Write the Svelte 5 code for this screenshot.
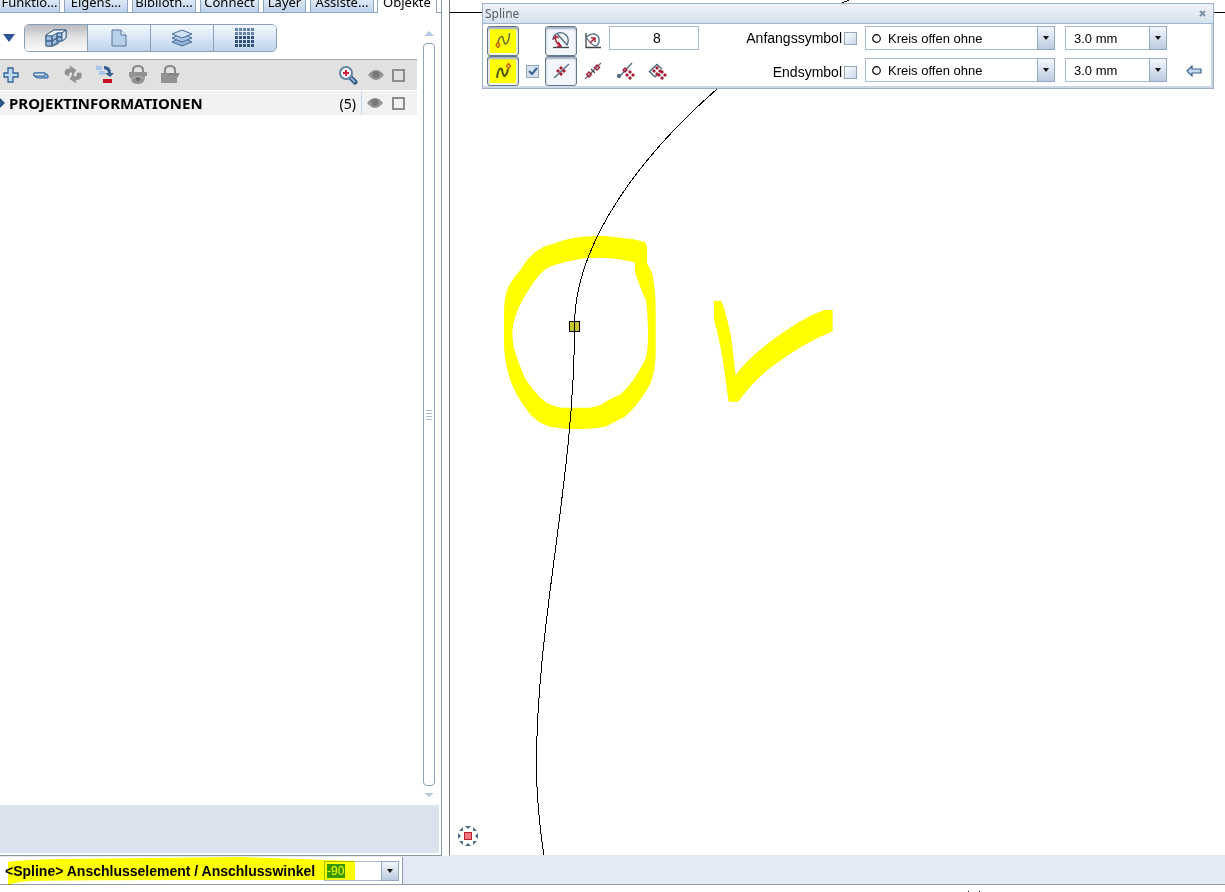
<script>
	const tabs = ['Funktio...', 'Eigens...', 'Biblioth...', 'Connect', 'Layer', 'Assiste...', 'Objekte']
	const views = ['Topologie', 'Teilbilder', 'Layer', 'Materialien']
	const actions = ['Aufklappen', 'Zuklappen', 'Aktualisieren', 'Sortieren', 'Sichtbarkeit sperren', 'Sperren']
	const symbols = ['Kreis offen ohne', 'Kreis offen', 'Kreis voll']
	const sizes = ['2.0 mm', '3.0 mm', '4.0 mm']
	let activeTab = 'Objekte'
	let activeView = 'Topologie'
	let points = '8'
	let angle = '-90'
	let keepTangent = true
	let ends = [
		{ id: 'start', label: 'Anfangssymbol', on: false, symbol: 'Kreis offen ohne', size: '3.0 mm' },
		{ id: 'end', label: 'Endsymbol', on: false, symbol: 'Kreis offen ohne', size: '3.0 mm' }
	]
</script>

{#snippet eye()}
	<svg width="16" height="12" viewBox="0 0 16 12">
		<path d="M0 6 Q4 1 8 1 T16 6 Q12 11 8 11 T0 6Z" fill="#999" />
		<circle cx="8" cy="5.500" r="3.500" fill="#777" />
		<path d="M1 6 Q4 2 8 2 T15 6" fill="none" stroke="#858585" />
	</svg>
{/snippet}

{#snippet arrow()}
	<span class="drop"><svg width="6" height="4" viewBox="0 0 6 4"><path d="M0 0H6L3 4Z" fill="#111" /></svg></span>
{/snippet}

{#snippet viewIcon(name)}
	{#if name === 'Topologie'}
		<svg width="22" height="18" viewBox="0 0 22 18" stroke="#3f5f86" stroke-linejoin="round">
			<path d="M1 6L9 1H21V9L17 12H14V14L8 17H1Z" fill="#a9c4e4" />
			<path d="M1 6L9 1H21L17 4H13L8 7H1Z" fill="#f3f8fd" />
			<path d="M1 7H7V12H1ZM1 12H7V17H1ZM7 7L12 4V9L7 12ZM7 12L12 9V14L7 17ZM12 4H17V8H12ZM12 8H17V12H12Z" fill="#9fbde0" />
			<path d="M17 4L21 1V9L17 12Z" fill="#e2edf8" />
		</svg>
	{:else if name === 'Teilbilder'}
		<svg width="16" height="18" viewBox="0 0 16 18">
			<path d="M1 1H10L15 6V17H1Z" fill="#b7cfe9" stroke="#56759c" />
			<path d="M10 1V6H15" fill="#eef5fc" stroke="#56759c" />
		</svg>
	{:else if name === 'Layer'}
		<svg width="22" height="18" viewBox="0 0 22 18" stroke="#4a6c94">
			<path d="M1 13L11 8L21 13L11 17Z" fill="#91b3da" />
			<path d="M1 9L11 4L21 9L11 13Z" fill="#a9c6e6" />
			<path d="M1 5L11 1L21 5L11 9Z" fill="#cfe0f3" />
		</svg>
	{:else}
		<svg width="20" height="20" viewBox="0 0 20 20">
			{#each [0, 1, 2, 3, 4] as row}
				{#each [0, 1, 2, 3, 4] as col}
					<rect x={col * 4} y={row * 4} width="3" height="3" fill={row < 2 ? '#6583ad' : '#34527f'} />
				{/each}
			{/each}
		</svg>
	{/if}
{/snippet}

{#snippet actionIcon(i)}
	<svg width="20" height="20" viewBox="0 0 20 20">
		{#if i === 0}
			<path d="M8 3H13V8H18V12H13V17H8V12H4V8H8Z" fill="#c3dbf2" stroke="#31639a" stroke-width="1.300" />
		{:else if i === 1}
			<path d="M2 8H13L16 10V13H5L2 11Z" fill="#8eb4dc" stroke="#31639a" />
			<path d="M2 8H13V11H2Z" fill="#d8e8f7" stroke="#31639a" />
		{:else if i === 2}
			<path d="M1 9Q0 3 7 4L6 1L12 5L9 10L8 7Q4 7 5 11ZM17 8Q19 15 11 15L12 18L6 14L9 9L10 12Q14 12 13 8Z" fill="#929292" stroke="#858585" stroke-width=".5" />
		{:else if i === 3}
			<path d="M0 1H6V5H0ZM3 6H9V10H3Z" fill="#a9c5e8" />
			<path d="M8 1Q15 1 15 8H18L14 12L9 8H12Q12 5 8 4Z" fill="#35608f" />
			<path d="M7 14H16V18H7Z" fill="#c51020" />
		{:else if i === 4}
			<path d="M5 8V4Q6 1 10 1T15 4V8" fill="none" stroke="#888" stroke-width="2" />
			<path d="M1 7H19V11H17Q17 19 10 19T3 14L1 11Z" fill="#929292" />
			<path d="M3 14Q10 9 17 14" fill="none" stroke="#bbb" />
			<circle cx="10" cy="14" r="2" fill="#6c6c6c" />
		{:else}
			<path d="M5 9V4Q6 1 10 1T15 4V9" fill="none" stroke="#888" stroke-width="2" />
			<path d="M1 8H20L17 13V18H1Z" fill="#929292" />
			<path d="M8 10Q13 7 18 11" fill="none" stroke="#777" />
		{/if}
	</svg>
{/snippet}

{#snippet knot(x, y)}
	<path
		transform="translate({x} {y})"
		d="M0 -5L2 -3L0 -1L-2 -3ZM0 1L2 3L0 5L-2 3ZM-3 -2L-1 0L-3 2L-5 0ZM3 -2L5 0L3 2L1 0Z"
		fill="#a51e38"
		stroke="none"
	/>
{/snippet}

{#snippet tool(kind)}
	<svg width="20" height="20" viewBox="0 0 20 20" fill="none" stroke="#526b7e" stroke-width="1.300">
		{#if kind === 'spline'}
			<path d="M5 12Q6 6 8.500 5.500C11 5 10 13 12.500 13Q16 12 16.500 2" stroke="#666f35" stroke-width="1.500" />
			<path d="M5 11.500L7 14L5 16.500L3 14Z" stroke="#d0560a" />
		{:else if kind === 'tangent'}
			<path d="M4 17Q5 8 7.500 7.500C10 7 9 15 11.500 15Q14 14 15 8" stroke="#4d560e" stroke-width="2" />
			<path d="M15.500 2.500L17.500 5L15.500 7.500L13.500 5Z" stroke="#d0560a" />
		{:else if kind === 'radius'}
			<path d="M2 16.500H18" stroke="#444" />
			<path d="M6 2.500L16 14Q19 8 15 4Q11 0 6 2.500Q2 4 2 9" />
			<path d="M5 5Q3 12 10 15M2.500 8L5 5L8 7M7 11L10 15L6 16" stroke="#b0233b" stroke-width="1.500" />
		{:else if kind === 'arc'}
			<path d="M3 2V16.500H18" stroke="#444" />
			<path d="M3 6Q8 2 12 3Q17 5 16 11Q15 14 13 15Q9 15 3 6Z" />
			<path d="M7 12L12 7M8 7H12V11" stroke="#b0233b" stroke-width="1.500" />
		{:else if kind === 'near'}
			<path d="M3 17L18 3" />
			{@render knot(10, 10)}
		{:else if kind === 'between'}
			<path d="M2 18L18 2" stroke="#6c6470" />
			<path d="M6 11L8.500 13.500L6 16L3.500 13.500ZM14 4L16.500 6.500L14 9L11.500 6.500Z" stroke="#a51e38" />
			<path d="M8 8L12 12" stroke="#444" />
		{:else if kind === 'end'}
			<path d="M4 16L17 2" />
			<circle cx="4" cy="15" r="1.500" fill="#526b7e" />
			<path d="M10 7L12 9L10 11L8 9Z" stroke="#a51e38" />
			{@render knot(15, 14)}
		{:else}
			<path d="M8 16L2.500 10.500L10 3.500L15 8M8 16L10 14" stroke-width="1.500" />
			{@render knot(10, 10)}
			{@render knot(15, 14)}
		{/if}
	</svg>
{/snippet}

<main>
	<div class="workspace">
		<aside>
			<nav>
				{#each tabs as tab}
					<button class="tab" class:active={tab === activeTab} on:click={() => (activeTab = tab)}>{tab}</button>
				{/each}
			</nav>
			<div class="browser">
				<div class="content">
					<div class="views">
						<button class="menu" aria-label="Menü">
							<svg width="12" height="8" viewBox="0 0 12 8"><path d="M0 0H12L6 8Z" fill="#2c5596" /></svg>
						</button>
						<div class="segments">
							{#each views as view}
								<button class:pressed={view === activeView} aria-label={view} on:click={() => (activeView = view)}>
									{@render viewIcon(view)}
								</button>
							{/each}
						</div>
					</div>
					<div class="actions">
						{#each actions as action, i}
							<button aria-label={action}>{@render actionIcon(i)}</button>
						{/each}
						<button class="search" aria-label="Suchen">
							<svg width="20" height="20" viewBox="0 0 20 20">
								<path d="M12 12L17 17" stroke="#31577f" stroke-width="5" stroke-linecap="round" />
								<path d="M13 13L17 17" stroke="#8eb1d6" stroke-width="2" />
								<circle cx="8" cy="8" r="6" fill="#fff" stroke="#64829f" stroke-width="2" />
								<path d="M8 5V11M5 8H11" stroke="#d8203c" stroke-width="2" />
							</svg>
						</button>
						<button class="small" aria-label="Alle sichtbar">{@render eye()}</button>
						<input class="square" type="checkbox" aria-label="Alle auswählen" />
					</div>
					<div class="group">
						<button class="name"><svg width="5" height="10" viewBox="0 0 5 10"><path d="M0 0L5 5L0 10Z" fill="#2c5580" /></svg><strong>PROJEKTINFORMATIONEN</strong></button>
						<span class="count">(5)</span>
						<div class="marks">
							<button class="small" aria-label="Sichtbar">{@render eye()}</button>
							<input class="square" type="checkbox" aria-label="Auswählen" />
						</div>
					</div>
				</div>
				<div class="scroll">
					<button aria-label="Nach oben"><svg width="10" height="5" viewBox="0 0 10 5"><path d="M0 5L5 0L10 5Z" fill="#b5cbe2" /></svg></button>
					<div class="thumb"><i></i><i></i><i></i><i></i></div>
					<button aria-label="Nach unten"><svg width="10" height="5" viewBox="0 0 10 5"><path d="M0 0L5 4L10 0Z" fill="#b5cbe2" /></svg></button>
				</div>
			</div>
			<div class="foot"></div>
		</aside>

		<section class="canvas">
			<svg class="drawing" width="100%" height="100%">
				<g transform="translate(40 220) scale(.3333)" fill="#ff0">
					<path fill-rule="evenodd" d="M42 290C42 200 60 190 95 145C115 108 150 80 185 73C240 52 280 48 345 48L430 58L465 66L471 80V130L485 155Q497 200 497 270V410Q492 480 470 510Q440 560 405 590L345 620Q310 628 230 627L180 620Q135 605 115 575Q70 520 55 460Q42 410 42 370Z M67 335Q70 290 100 235Q150 150 180 140Q240 120 285 115Q350 110 400 120L435 127V155Q450 205 468 240Q475 290 474 350Q474 400 465 420Q430 490 392 523L350 543Q330 560 300 563H215Q185 558 165 545Q130 515 105 475Q85 430 72 385Q67 360 67 335Z" />
					<path d="M672 242H694Q710 280 724 355L737 465Q790 395 905 320Q960 285 1003 270H1028V334Q940 370 860 430Q800 470 745 545H716L700 430Q685 340 672 300Z" />
				</g>
				<rect x="119" y="321" width="11" height="11" fill="#000" />
				<rect x="120" y="322" width="9" height="9" fill="#c8c832" />
				<g fill="none" stroke="#000" shape-rendering="crispEdges">
					<path d="M0 12.500H2000" />
					<path d="M399 0L392 3M267 89C195 152 124.500 240 124.500 326C124.500 480 86.500 620 86.500 765C86.500 800 90 830 94 856" />
				</g>
			</svg>

			<form class="palette">
				<header>
					<span>Spline</span>
					<button type="button" class="close" aria-label="Schließen">
						<svg width="7" height="7" viewBox="0 0 7 7"><path d="M1 1L6 6M6 1L1 6" stroke="#7d92a8" stroke-width="2" /></svg>
					</button>
				</header>
				<div class="body">
					<div class="tools">
						<button type="button" class="on marked" aria-label="Spline">{@render tool('spline')}</button>
						<span></span>
						<button type="button" class="on" aria-label="Radius">{@render tool('radius')}</button>
						<button type="button" aria-label="Bogen">{@render tool('arc')}</button>
						<input class="points" type="text" aria-label="Anzahl" bind:value={points} />
						<button type="button" class="on marked" aria-label="Tangente">{@render tool('tangent')}</button>
						<input class="check" type="checkbox" aria-label="Anschluss" bind:checked={keepTangent} />
						<button type="button" class="on" aria-label="Punkt">{@render tool('near')}</button>
						<button type="button" aria-label="Punkte">{@render tool('between')}</button>
						<button type="button" aria-label="Endpunkt">{@render tool('end')}</button>
						<button type="button" aria-label="Fläche">{@render tool('area')}</button>
					</div>
					<div class="labels">
						{#each ends as end}
							<label>{end.label}<input class="check" type="checkbox" bind:checked={end.on} /></label>
						{/each}
					</div>
					<div class="selects">
						{#each ends as end}
							<div class="combo symbol">
								<svg class="ring" width="9" height="9" viewBox="0 0 9 9"><circle cx="4.500" cy="4.500" r="3.800" fill="#fff" stroke="#000" stroke-width="1.200" /></svg>
								<select aria-label={end.label} bind:value={end.symbol}>
									{#each symbols as symbol}<option>{symbol}</option>{/each}
								</select>
								{@render arrow()}
							</div>
							<div class="combo">
								<select aria-label="Größe {end.label}" bind:value={end.size}>
									{#each sizes as size}<option>{size}</option>{/each}
								</select>
								{@render arrow()}
							</div>
						{/each}
					</div>
					<button type="button" class="back" aria-label="Zurück">
						<svg width="16" height="12" viewBox="0 0 16 12"><path d="M1 6L6 1V4H15V8H6V11Z" fill="#c6daf0" stroke="#3b628f" stroke-width="1.200" /></svg>
					</button>
				</div>
			</form>

			<button class="nav3d" aria-label="Navigation">
				<svg width="22" height="22" viewBox="0 0 22 22">
					<path d="M8 1H14L11 4ZM8 21H14L11 18ZM1 8V14L4 11ZM21 8V14L18 11ZM2 6L6 2V6ZM20 6L16 2V6ZM2 16L6 20V16ZM20 16L16 20V16Z" fill="#4a6a8c" />
					<rect x="7.500" y="7.500" width="7" height="7" fill="#f0787c" stroke="#b5222f" />
				</svg>
			</button>
		</section>
	</div>

	<footer>
		<div class="command">
			<label for="angle">&lt;Spline&gt; Anschlusselement / Anschlusswinkel</label>
			<div class="combo angle">
				<input id="angle" type="text" bind:value={angle} />
				{@render arrow()}
			</div>
			<svg class="marker" width="355" height="28" viewBox="0 0 355 28"><path d="M8 5Q20 3 60 2L150 1L240 0L300 2L355 4V23L310 23L170 23Q70 23 30 24Q15 25 8 28Z" fill="#ff0" /></svg>
		</div>
	</footer>
	<div class="rest">
		<svg width="14" height="2" viewBox="0 0 14 2"><path d="M0 1H1V2H0ZM11 1H12V2H11Z" fill="#000" /></svg>
	</div>
</main>

<style>
	:global(body) {
		margin: 0;
		background: #fff;
	}
	main {
		display: flex;
		flex-direction: column;
		height: 100vh;
		overflow: hidden;
		font-family: "Liberation Sans", Arial, sans-serif;
		font-size: 14px;
		color: #000;
	}
	button, input, select {
		box-sizing: border-box;
		margin: 0;
		font: inherit;
		color: inherit;
	}
	button {
		display: flex;
		align-items: center;
		justify-content: center;
		padding: 0;
		border: 0;
		background: none;
	}
	svg {
		display: block;
		flex: none;
	}
	.workspace {
		display: flex;
		flex: 1;
		min-height: 0;
	}

	/* left panel */
	aside {
		display: flex;
		flex-direction: column;
		box-sizing: border-box;
		flex: none;
		width: 442px;
		border-right: 1px solid #8b98a8;
		border-bottom: 1px solid #8b98a8;
		font-family: "Noto Sans", "Open Sans", sans-serif;
	}
	nav {
		display: flex;
		gap: 4px;
		height: 13px;
		align-items: flex-end;
		overflow: hidden;
		flex: none;
		box-shadow: inset 0 -1px #8fa4bf;
	}
	.tab {
		flex: none;
		box-sizing: border-box;
		width: 64px;
		height: 22px;
		border: 1px solid #8fa4bf;
		background: linear-gradient(#f2f7fc, #bed3ec);
		font-size: 13px;
		line-height: 20px;
	}
	.tab:first-child {
		width: 60px;
		border-left: 0;
	}
	.tab:nth-child(4) {
		width: 59px;
	}
	.tab:nth-child(5) {
		width: 43px;
	}
	.tab.active {
		width: 60px;
		margin-left: -1px;
		padding-bottom: 2px;
		border-bottom: 0;
		background: #fff;
	}
	.browser {
		display: flex;
		flex: 1;
		min-height: 0;
	}
	.content {
		flex: 1;
		min-width: 0;
	}
	.views {
		display: flex;
		align-items: center;
		gap: 9px;
		padding: 11px 0 7px 3px;
	}
	.segments {
		display: flex;
		overflow: hidden;
		border: 1px solid #8b9fb9;
		border-radius: 5px;
	}
	.segments button {
		width: 63px;
		height: 26px;
		border-right: 1px solid #8b9fb9;
		background: linear-gradient(#f3f8fd, #d9e7f6 50%, #bed3eb);
	}
	.segments button:last-child {
		width: 62px;
		border-right: 0;
	}
	.segments .pressed {
		background: linear-gradient(#b9bbbe, #e3e4e5 50%, #fafafa);
	}
	.actions {
		display: flex;
		align-items: center;
		height: 31px;
		box-sizing: border-box;
		padding-right: 12px;
		gap: 12px;
		border-top: 1px solid #a9a9a9;
		background: #e1e1e1;
	}
	.actions button {
		width: 20px;
	}
	.actions .search {
		margin: 0 -4px 0 auto;
	}
	.actions .small {
		margin-right: -6px;
	}
	.group {
		display: flex;
		height: 24px;
		margin-top: 1px;
		align-items: center;
		background: #f2f2f2;
	}
	.name {
		gap: 4px;
		font-size: 15px;
		line-height: 20px;
	}
	.count {
		margin-left: auto;
		padding-right: 5px;
	}
	.marks {
		display: flex;
		align-items: center;
		gap: 9px;
		height: 24px;
		padding: 0 12px 0 5px;
		border-left: 1px solid #c6d9ec;
	}
	.square {
		appearance: none;
		flex: none;
		width: 13px;
		height: 13px;
		border: 2px solid #8c8c8c;
	}
	.scroll {
		display: flex;
		flex-direction: column;
		align-items: center;
		gap: 7px;
		width: 24px;
		padding: 18px 0 7px;
	}
	.thumb {
		display: flex;
		flex: 1;
		flex-direction: column;
		align-items: center;
		justify-content: center;
		gap: 2px;
		width: 10px;
		border: 1px solid #8da2bc;
		border-radius: 4px;
	}
	.thumb i {
		width: 6px;
		height: 1px;
		background: #a9bfd3;
	}
	.foot {
		height: 48px;
		margin: 0 2px 2px 0;
		background: #dbe2ed;
	}

	/* drawing area */
	.canvas {
		position: relative;
		flex: 1;
		min-width: 0;
		margin-left: 7px;
		border-left: 1px solid #77777f;
		border-bottom: 1px solid #e6eaee;
	}
	.drawing {
		position: absolute;
		inset: 0;
	}
	.palette {
		position: absolute;
		top: 3px;
		left: 32px;
		right: 11px;
		border: 1px solid #9db0c6;
		background: #fff;
		box-shadow: inset -2px -2px #cbd8e7;
	}
	.palette header {
		display: flex;
		justify-content: space-between;
		align-items: center;
		height: 19px;
		padding: 0 7px 0 2px;
		border-bottom: 1px solid #9db7d3;
		background: linear-gradient(#f0f4f9, #d5e1ef);
		color: #555d68;
		font: 12px/23px "Noto Sans", "Open Sans", sans-serif;
	}
	.body {
		display: flex;
		align-items: flex-start;
		padding: 2px 0 2px 4px;
	}
	.tools {
		display: grid;
		grid-template-columns: 32px 26px 32px 32px 32px 32px 26px;
		grid-template-rows: 30px 30px;
		align-items: center;
		justify-items: center;
	}
	.tools button {
		width: 32px;
		height: 30px;
	}
	.tools .on {
		border: 1px solid #647990;
		border-radius: 3px;
		background: #f3f7fc;
		box-shadow: inset 0 2px 2px #a0aebd;
	}
	.tools .marked {
		background: #ff0;
		box-shadow: inset 0 2px 2px #a0aebd, inset 0 0 0 2px #f0f4e8;
	}
	.points {
		grid-column: span 3;
		align-self: start;
		width: 90px;
		height: 24px;
		padding: 0 0 0 6px;
		border: 1px solid #a5bbd3;
		background: #fff;
		text-align: center;
	}
	.check {
		appearance: none;
		flex: none;
		width: 13px;
		height: 13px;
		border: 1px solid #93a6bc;
		background: linear-gradient(135deg, #fff, #c6d8eb);
	}
	.check:checked {
		background: url("data:image/svg+xml,%3Csvg xmlns='http://www.w3.org/2000/svg' viewBox='0 0 11 11'%3E%3Cpath d='M2 5L5 8L10 2' fill='none' stroke='%233b628d' stroke-width='2'/%3E%3C/svg%3E"), #d5e2f0;
	}
	.labels {
		display: flex;
		flex-direction: column;
		gap: 20px;
		width: 110px;
		margin-left: 48px;
		padding-top: 5px;
	}
	.labels label {
		display: flex;
		align-items: center;
		justify-content: flex-end;
		gap: 2px;
		height: 14px;
		line-height: 14px;
	}
	.selects {
		display: grid;
		grid-template-columns: 190px 102px;
		gap: 8px 10px;
		margin-left: 8px;
	}
	.combo {
		display: grid;
		align-items: center;
		height: 24px;
	}
	.combo > * {
		grid-area: 1 / 1;
	}
	.combo select, .combo input {
		appearance: none;
		width: 100%;
		height: 100%;
		padding: 0 18px 0 8px;
		border: 1px solid #a5bbd3;
		border-radius: 0;
		background: #fff;
		font-size: 13px;
	}
	.combo.symbol select {
		padding-left: 22px;
	}
	.ring {
		z-index: 1;
		margin-left: 7px;
	}
	.drop {
		display: flex;
		align-items: center;
		justify-content: center;
		justify-self: end;
		box-sizing: border-box;
		width: 18px;
		height: 100%;
		border: 1px solid #93aac4;
		background: linear-gradient(#f3f7fb, #b9cce1);
		pointer-events: none;
	}
	.back {
		align-self: flex-end;
		height: 30px;
		margin: 0 11px 0 auto;
	}
	.nav3d {
		position: absolute;
		left: 7px;
		bottom: 8px;
	}

	/* command line */
	footer {
		display: flex;
		flex: none;
		height: 27px;
		padding-top: 1px;
		border-bottom: 1px solid #929ba8;
		background: #e3e9f5;
	}
	.command {
		position: relative;
		display: flex;
		align-items: center;
		justify-content: space-between;
		box-sizing: border-box;
		width: 403px;
		padding: 0 3px 0 5px;
		border-right: 1px solid #8b98a8;
		background: #fff;
	}
	.command label {
		font-weight: bold;
		white-space: nowrap;
	}
	.combo.angle {
		width: 75px;
		height: 20px;
	}
	.combo.angle input {
		padding-left: 2px;
		background: linear-gradient(#3899d0, #3899d0) 2px 2px / 18px 14px no-repeat #fff;
		color: #fff;
		font-size: 12px;
	}
	.marker {
		position: absolute;
		left: 0;
		top: 0;
		mix-blend-mode: multiply;
		pointer-events: none;
	}
	.rest {
		display: flex;
		flex: none;
		align-items: flex-end;
		height: 7px;
		padding-left: 79%;
	}
</style>
